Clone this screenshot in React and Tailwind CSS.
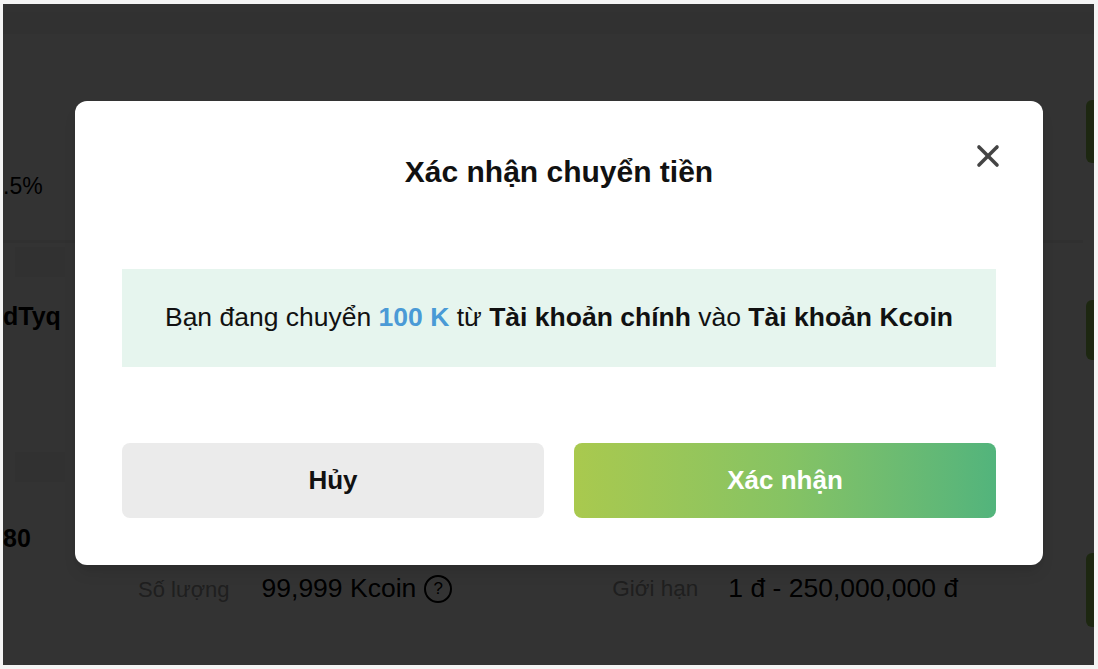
import { X } from "lucide-react";

const font = { fontFamily: '"Liberation Sans", Arial, sans-serif' };

function BackgroundPage() {
  return (
    <div className="absolute inset-0 bg-white text-black">
      <div className="h-[8px] bg-[#f7f7f7]" />
      <div className="h-[22px] bg-[#f2f2f2]" />
      <div className="flex justify-between">
        <div className="w-[1080px]">
          <div className="h-[209px] border-b-[3px] border-[#f0f0f0] pt-[139px] text-[23px] leading-[26px] font-medium">
            .5%
          </div>
          <div className="mt-[4px] ml-[12px] h-[30px] w-[50px] bg-[#f2f2f2]" />
          <div className="h-[175px] pt-[26px] text-[25px] leading-[26px] font-bold">dTyq</div>
          <div className="ml-[12px] h-[30px] w-[50px] bg-[#f2f2f2]" />
          <div className="pt-[43px] text-[25px] leading-[26px] font-bold">80</div>
          <div className="mt-[23px] flex h-[30px] items-center pl-[135px] text-[26.5px]">
            <span className="text-[22px] text-[#999]">Số lượng</span>
            <span className="ml-[32px]">99,999 Kcoin</span>
            <span className="ml-[8px] flex h-[28px] w-[28px] items-center justify-center rounded-full border-2 border-black text-[17px]">
              ?
            </span>
            <span className="ml-[160px] text-[22.5px] text-[#999]">Giới hạn</span>
            <span className="ml-[30px]">1 đ - 250,000,000 đ</span>
          </div>
        </div>
        <div className="flex w-[8px] flex-col">
          <div className="mt-[66px] h-[63px] rounded-l-md bg-[#8fc454]" />
          <div className="mt-[137px] h-[60px] rounded-l-md bg-[#8fc454]" />
          <div className="mt-[193px] h-[74px] rounded-l-md bg-[#8fc454]" />
        </div>
      </div>
    </div>
  );
}

export default function App() {
  return (
    <div className="h-[669px] w-[1098px] bg-[#f4f4f4] pt-[4px] pl-[3px]" style={font}>
      <div className="relative h-[661px] w-[1091px] overflow-hidden">
        <BackgroundPage />
        <div className="absolute inset-0 bg-black/80" />
        <div className="absolute left-[72px] top-[97px] flex h-[464px] w-[968px] flex-col rounded-[12px] bg-white px-[47px] pb-[47px] shadow-lg">
          <div className="relative flex h-[168px] items-start justify-center pt-[52px]">
            <h2 className="text-[30px] font-bold leading-[38px] text-[#111]">Xác nhận chuyển tiền</h2>
            <button className="absolute right-[-10px] top-[37px] text-[#444]">
              <X size={36} strokeWidth={2.4} />
            </button>
          </div>
          <div className="flex h-[98px] items-center justify-center bg-[#e6f5ee] text-[26.5px] text-[#111]">
            <p>
              Bạn đang chuyển <span className="font-bold text-[#4a9ad6]">100 K</span> từ{" "}
              <span className="font-bold">Tài khoản chính</span> vào{" "}
              <span className="font-bold">Tài khoản Kcoin</span>
            </p>
          </div>
          <div className="mt-auto grid grid-cols-2 gap-[30px]">
            <button className="h-[75px] rounded-[8px] bg-[#ebebeb] text-[26px] font-bold text-[#111]">Hủy</button>
            <button className="h-[75px] rounded-[8px] bg-gradient-to-r from-[#a9c94e] via-[#86c363] to-[#52b47c] text-[26px] font-bold text-white">
              Xác nhận
            </button>
          </div>
        </div>
      </div>
    </div>
  );
}
